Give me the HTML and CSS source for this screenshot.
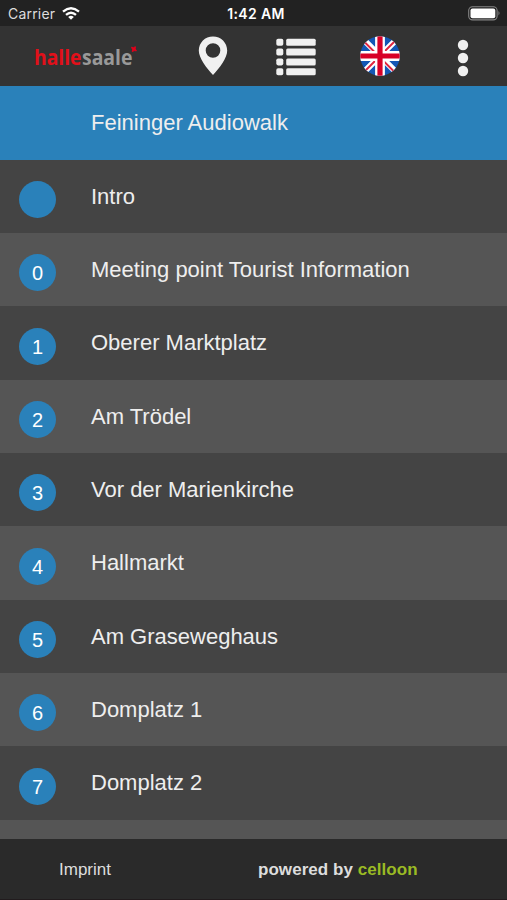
FILE: index.html
```html
<!DOCTYPE html>
<html lang="en">
<head>
<meta charset="utf-8">
<title>Feininger Audiowalk</title>
<link rel="stylesheet" href="styles.css">
</head>
<body>
<div class="app">
  <header class="status">
    <div class="carrier">
      <span>Carrier</span>
      <svg width="18" height="13" viewBox="0 0 18 13"><g fill="none" stroke="#fff" stroke-width="2.3"><path d="M1 4.7Q9-2.1 17 4.7"/><path d="M4 7.9Q9 3.5 14 7.9"/></g><path d="M6.2 10Q9 7.6 11.8 10L9 12.7Z" fill="#fff"/></svg>
    </div>
    <div class="clock">1:42 AM</div>
    <svg class="battery" width="33" height="15" viewBox="0 0 33 15"><rect x=".7" y=".7" width="28.4" height="13.2" rx="3.8" fill="#222" stroke="#858585" stroke-width="1.1"/><rect x="2.5" y="2.4" width="24.8" height="9.8" rx="2" fill="#fff"/><path d="M30.5 5Q32.5 7.2 30.5 9.5Z" fill="#858585"/></svg>
  </header>
  <nav class="toolbar">
    <svg class="logo" width="108" height="40" viewBox="0 0 108 40"><text class="logo-text" y="29"><tspan class="logo-red" x="0" textLength="47.500" lengthAdjust="spacingAndGlyphs">halle</tspan><tspan class="logo-gray" x="48" textLength="50.500" lengthAdjust="spacingAndGlyphs">saale</tspan></text><path d="M97.500 11.200l2 .5 1.900-1-.2 2.200 1.200 1.900-2.200-.2-1.900 1 .2-2.200z" fill="#e2001a" stroke="#e2001a"/></svg>
    <svg class="pin" width="30" height="40" viewBox="0 0 30 40"><path fill="#f0f0f0" fill-rule="evenodd" d="M15 .5C7 .5 .8 6.700 .8 14.500C.8 22 8.500 32 15 39C21.500 32 29.200 22 29.200 14.500C29.200 6.700 23 .5 15 .5ZM15 7.200a7.300 7.300 0 1 1 0 14.600a7.300 7.300 0 0 1 0-14.600Z"/></svg>
    <svg class="list-icon" width="40" height="38" viewBox="0 0 40 38" fill="#f0f0f0"><rect x=".3" y=".8" width="7" height="7" rx="1.800"/><rect x="10.200" y=".8" width="29.500" height="7" rx="1.500"/><rect x=".3" y="10.600" width="7" height="7" rx="1.800"/><rect x="10.200" y="10.600" width="29.500" height="7" rx="1.500"/><rect x=".3" y="20.400" width="7" height="7" rx="1.800"/><rect x="10.200" y="20.400" width="29.500" height="7" rx="1.500"/><rect x=".3" y="30.200" width="7" height="7" rx="1.800"/><rect x="10.200" y="30.200" width="29.500" height="7" rx="1.500"/></svg>
    <svg class="flag" width="40" height="40" viewBox="0 0 40 40"><defs><clipPath id="disc"><circle cx="20" cy="20" r="19.800"/></clipPath></defs><g clip-path="url(#disc)"><path d="M0 0h40v40H0z" fill="#1457b5"/><path d="M0 0l40 40M40 0L0 40" stroke="#fff" stroke-width="6"/><path d="M4 5.500L18 19.500M36 4L22 18M4 36L18 22M36 37.500L22 23.500" stroke="#e0253f" stroke-width="1.900"/><path d="M20 0v40M0 20h40" stroke="#fff" stroke-width="9.800"/><path d="M20 0v40M0 20h40" stroke="#d80027" stroke-width="5.200"/></g></svg>
    <svg class="more" width="12" height="38" viewBox="0 0 12 38" fill="#f0f0f0"><circle cx="6" cy="6" r="5.200"/><circle cx="6" cy="19" r="5.200"/><circle cx="6" cy="32" r="5.200"/></svg>
  </nav>
  <main class="stops">
    <div class="row title"><span class="label">Feininger Audiowalk</span></div>
    <div class="row"><span class="num"></span><span class="label">Intro</span></div>
    <div class="row"><span class="num">0</span><span class="label">Meeting point Tourist Information</span></div>
    <div class="row"><span class="num">1</span><span class="label">Oberer Marktplatz</span></div>
    <div class="row"><span class="num">2</span><span class="label">Am Trödel</span></div>
    <div class="row"><span class="num">3</span><span class="label">Vor der Marienkirche</span></div>
    <div class="row"><span class="num">4</span><span class="label">Hallmarkt</span></div>
    <div class="row"><span class="num">5</span><span class="label">Am Graseweghaus</span></div>
    <div class="row"><span class="num">6</span><span class="label">Domplatz 1</span></div>
    <div class="row"><span class="num">7</span><span class="label">Domplatz 2</span></div>
    <div class="row"></div>
  </main>
  <footer class="footer">
    <span class="imprint">Imprint</span>
    <span class="powered">powered by <span class="brand">celloon</span></span>
  </footer>
</div>
</body>
</html>
```
FILE: styles.css
```css
* { box-sizing: border-box; }
body { margin: 0; background: #2a2a2a; font-family: "Liberation Sans", Arial, sans-serif; }
svg { display: block; flex: none; }
.app { display: flex; flex-direction: column; width: 507px; height: 900px; overflow: hidden; }
.status { display: grid; grid-template-columns: 1fr auto 1fr; flex: none; height: 26px; padding: 1px 6px 0 8px; align-items: center; background: #222; color: #fff; font-family: Inter, sans-serif; font-size: 14px; }
.carrier { display: flex; align-items: center; gap: 7px; color: #ddd; letter-spacing: .2px; }
.clock { font-weight: 600; font-size: 14px; letter-spacing: .35px; margin-left: 3px; }
.battery { justify-self: end; }
.toolbar { display: flex; flex: none; align-items: center; height: 60.300px; background: #333; }
.logo { margin-left: 34px; }
.logo-text { font-family: "Open Sans", sans-serif; font-size: 20.500px; font-weight: 700; }
.logo-red { fill: #e2101a; }
.logo-gray { fill: #999; }
.pin { margin-left: 56px; }
.list-icon { margin-left: 48px; margin-top: 2px; }
.flag { margin-left: 44px; }
.more { margin-left: 57px; margin-top: 3px; }
.stops { flex: 1; min-height: 0; overflow: hidden; }
.row { display: grid; grid-template-columns: 72px 1fr; height: 73.330px; padding-left: 19px; background: #555; color: #eee; }
.row:nth-child(even) { background: #444; }
.row.title { background: #2a81ba; }
.num { width: 37px; height: 37px; margin-top: 21.500px; border-radius: 50%; background: #2a81ba; color: #fff; font-size: 20px; line-height: 38px; text-align: center; }
.label { grid-column: 2; margin-top: 24px; font-size: 22px; line-height: 26px; white-space: nowrap; }
.footer { display: flex; flex: none; height: 61px; padding: 20px 0 0 59px; background: #2a2a2a; border-bottom: 1px solid #211b1d; color: #ddd; font-size: 17px; line-height: 22px; }
.imprint { width: 199px; }
.powered { font-weight: 700; letter-spacing: .05px; }
.brand { color: #9aba24; }
```
